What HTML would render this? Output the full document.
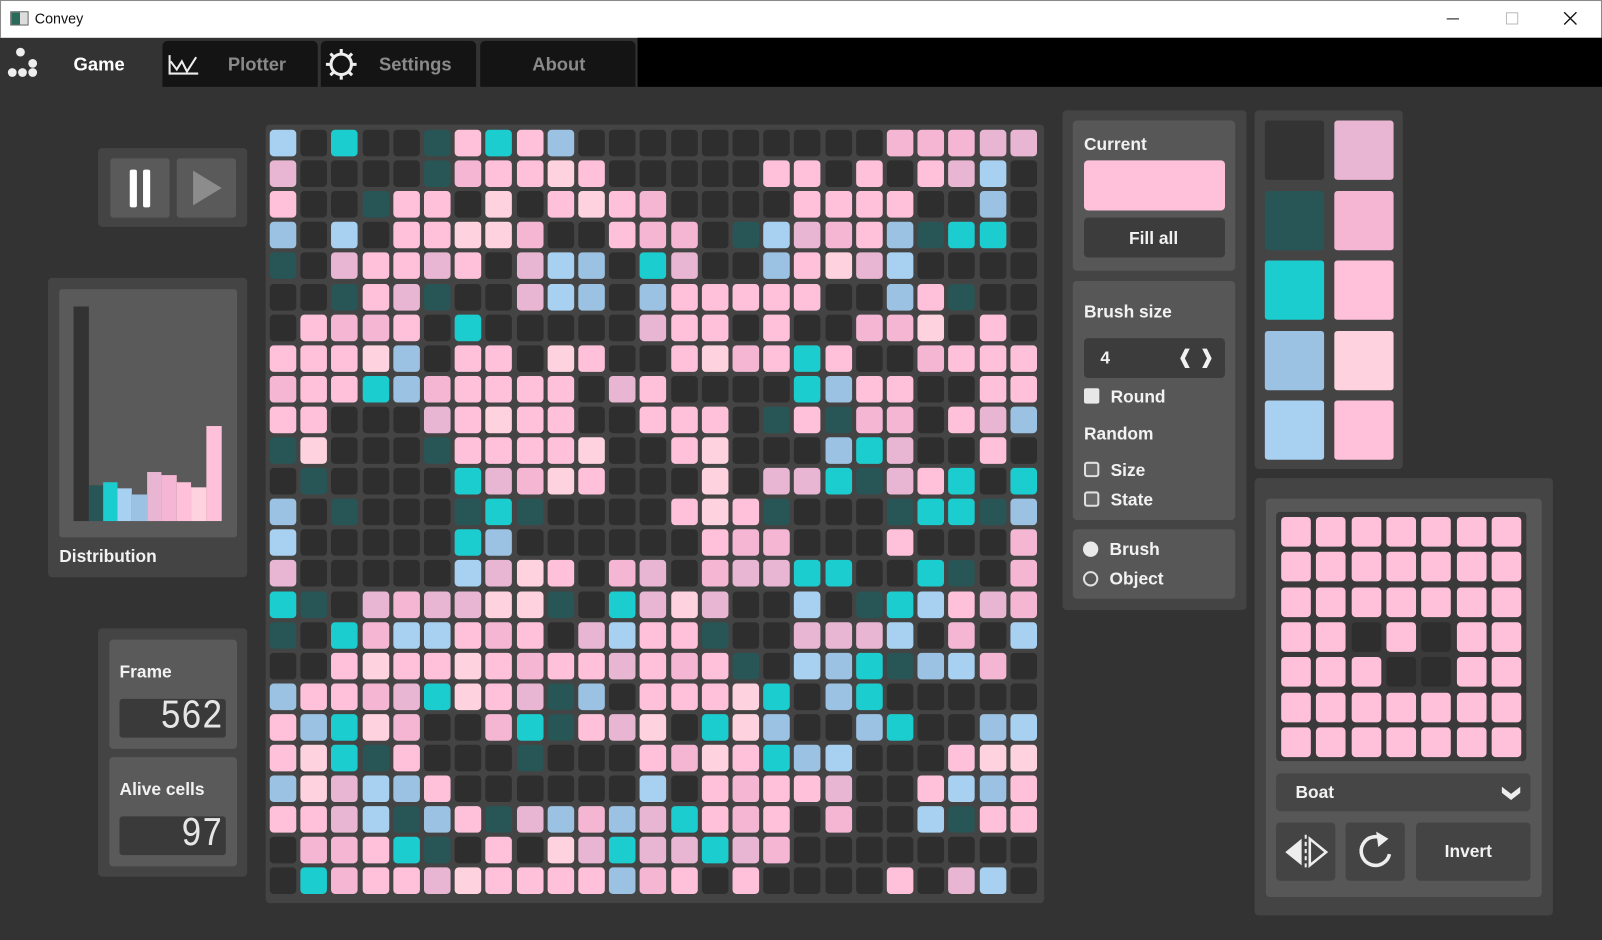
<!DOCTYPE html>
<html><head><meta charset="utf-8"><style>
*{box-sizing:border-box;margin:0;padding:0}
html,body{width:1602px;height:940px;overflow:hidden;background:#333}
#w{position:absolute;left:0;top:0;width:1568px;height:920px;transform:scale(1.02168);transform-origin:0 0;background:#333;font-family:"Liberation Sans","DejaVu Sans",sans-serif;font-weight:bold;color:#f0f0f0}
.a{position:absolute}
.pn{position:absolute;background:#444;border-radius:4px}
.in{position:absolute;background:#575757;border-radius:4px}
.lb{position:absolute;font-size:17px;color:#f2f2f2;white-space:nowrap}
.tab{position:absolute;top:40px;height:45px;background:#141414;border-radius:5px 5px 0 0;color:#8a8a8a;font-size:18px}
.c{position:absolute;width:26px;height:26px;border-radius:4px}
.btn{position:absolute;background:#3c3c3c;border-radius:4px}
.seg{position:absolute;font-family:"Liberation Mono",monospace;font-weight:normal;font-size:40px;color:#e6e6e6;transform:scaleX(0.85);transform-origin:right center}
</style></head><body><div id="w">
<!-- title bar -->
<div class="a" style="left:0;top:0;width:1568px;height:37px;background:#fff;border:1px solid #8a8a8a;border-bottom:none"></div>
<div class="a" style="left:10px;top:11px;width:18px;height:14px;border:1px solid #666;background:linear-gradient(90deg,#2a6a5a 0 55%,#ddd 55%)"></div>
<div class="a" style="left:34px;top:10px;font-size:14px;font-weight:normal;color:#111">Convey</div>
<div class="a" style="left:1416px;top:18px;width:12px;height:1px;background:#111"></div>
<div class="a" style="left:1474px;top:12px;width:12px;height:12px;border:1px solid #bbb"></div>
<svg class="a" style="left:1530px;top:11px" width="14" height="14"><path d="M1 1L13 13M13 1L1 13" stroke="#111" stroke-width="1.3"/></svg>
<!-- tab bar -->
<div class="a" style="left:624px;top:37px;width:944px;height:48px;background:#000"></div>
<svg class="a" style="left:6px;top:44px" width="34" height="34"><g fill="#eee"><circle cx="14" cy="7" r="4.3"/><circle cx="26" cy="18" r="4.3"/><circle cx="6" cy="27" r="4.3"/><circle cx="16" cy="27" r="4.3"/><circle cx="26" cy="27" r="4.3"/></g></svg>
<div class="a" style="left:72px;top:53px;font-size:18px;color:#fff">Game</div>
<div class="tab" style="left:159px;width:152px"><svg class="a" style="left:5px;top:12px" width="32" height="22"><path d="M2 2V20H30M3 8L9 16L14 8L19 18L28 4" stroke="#eee" stroke-width="2" fill="none"/></svg><span class="a" style="left:64px;top:13px">Plotter</span></div>
<div class="tab" style="left:314px;width:152px"><svg class="a" style="left:4px;top:8px" width="32" height="30" viewBox="-16 -15 32 30"><g stroke="#eee" stroke-width="3"><circle r="10" fill="none"/><path d="M0-15V-9M0 9V15M-15 0H-9M9 0H15M-10.6-10.6L-6.4-6.4M6.4 6.4L10.6 10.6M10.6-10.6L6.4-6.4M-6.4 6.4L-10.6 10.6"/></g></svg><span class="a" style="left:57px;top:13px">Settings</span></div>
<div class="tab" style="left:470px;width:152px"><span class="a" style="left:51px;top:13px">About</span></div>
<!-- play panel -->
<div class="pn" style="left:96px;top:145px;width:146px;height:77px"></div>
<div class="a" style="left:108px;top:155px;width:58px;height:58px;background:#5a5a5a;border-radius:3px"></div>
<div class="a" style="left:127px;top:166px;width:7px;height:37px;background:#fff;border-radius:2px"></div>
<div class="a" style="left:140px;top:166px;width:7px;height:37px;background:#fff;border-radius:2px"></div>
<div class="a" style="left:173px;top:155px;width:58px;height:58px;background:#5a5a5a;border-radius:3px"></div>
<svg class="a" style="left:173px;top:155px" width="58" height="58"><path d="M16 12L44 29L16 46Z" fill="#8c8c8c"/></svg>
<!-- distribution -->
<div class="pn" style="left:47px;top:272px;width:195px;height:293px"></div>
<div class="a" style="left:58px;top:283px;width:174px;height:243px;background:#5a5a5a;border-radius:3px"></div>
<div class="a" style="left:72px;top:300px;width:15px;height:210px;background:#333"></div>
<div class="a" style="left:87px;top:475px;width:14px;height:35px;background:#285555"></div>
<div class="a" style="left:101px;top:472px;width:14px;height:38px;background:#1ccdd0"></div>
<div class="a" style="left:115px;top:478px;width:14px;height:32px;background:#a8d0f0"></div>
<div class="a" style="left:129px;top:484px;width:15px;height:26px;background:#9bc2e2"></div>
<div class="a" style="left:144px;top:462px;width:14px;height:48px;background:#e8b6d2"></div>
<div class="a" style="left:158px;top:465px;width:15px;height:45px;background:#f4b6d3"></div>
<div class="a" style="left:173px;top:472px;width:14px;height:38px;background:#fec1d9"></div>
<div class="a" style="left:187px;top:477px;width:15px;height:33px;background:#fed2de"></div>
<div class="a" style="left:202px;top:417px;width:15px;height:93px;background:#fec1d9"></div>
<div class="lb" style="left:58px;top:535px">Distribution</div>
<!-- frame -->
<div class="pn" style="left:96px;top:615px;width:146px;height:243px"></div>
<div class="in" style="left:107px;top:626px;width:125px;height:107px;background:#5a5a5a"></div>
<div class="lb" style="left:117px;top:648px">Frame</div>
<div class="a" style="left:117px;top:684px;width:104px;height:38px;background:#3a3a3a;border-radius:3px"></div>
<div class="seg" style="right:1350px;top:680px">562</div>
<div class="in" style="left:107px;top:741px;width:125px;height:107px;background:#5a5a5a"></div>
<div class="lb" style="left:117px;top:763px">Alive cells</div>
<div class="a" style="left:117px;top:799px;width:104px;height:38px;background:#3a3a3a;border-radius:3px"></div>
<div class="seg" style="right:1350px;top:795px">97</div>
<!-- grid -->
<div class="pn" id="g" style="left:260px;top:122px;width:762px;height:762px"></div>
<!-- right controls -->
<div class="pn" style="left:1040px;top:108px;width:180px;height:489px"></div>
<div class="in" style="left:1050px;top:118px;width:159px;height:147px"></div>
<div class="lb" style="left:1061px;top:132px">Current</div>
<div class="a" style="left:1061px;top:157px;width:138px;height:49px;background:#fec1d9;border-radius:4px"></div>
<div class="btn" style="left:1061px;top:213px;width:138px;height:39px"></div>
<div class="lb" style="left:1105px;top:224px">Fill all</div>
<div class="in" style="left:1050px;top:275px;width:159px;height:234px"></div>
<div class="lb" style="left:1061px;top:296px">Brush size</div>
<div class="btn" style="left:1061px;top:331px;width:138px;height:39px"></div>
<div class="lb" style="left:1077px;top:341px">4</div>
<div class="lb" style="left:1152px;top:339px;font-size:19px">❰ ❱</div>
<div class="a" style="left:1061px;top:380px;width:15px;height:15px;background:#e8e8e8;border-radius:2px"></div>
<div class="lb" style="left:1087px;top:379px">Round</div>
<div class="lb" style="left:1061px;top:415px">Random</div>
<div class="a" style="left:1061px;top:452px;width:15px;height:15px;border:2px solid #e0e0e0;background:#6a6a6a;border-radius:3px"></div>
<div class="lb" style="left:1087px;top:451px">Size</div>
<div class="a" style="left:1061px;top:481px;width:15px;height:15px;border:2px solid #e0e0e0;background:#6a6a6a;border-radius:3px"></div>
<div class="lb" style="left:1087px;top:480px">State</div>
<div class="in" style="left:1050px;top:518px;width:159px;height:68px"></div>
<div class="a" style="left:1060px;top:530px;width:15px;height:15px;border-radius:50%;background:#eaeaea"></div>
<div class="lb" style="left:1086px;top:528px">Brush</div>
<div class="a" style="left:1060px;top:559px;width:15px;height:15px;border-radius:50%;border:2px solid #e0e0e0"></div>
<div class="lb" style="left:1086px;top:557px">Object</div>
<!-- palette -->
<div class="pn" style="left:1228px;top:108px;width:145px;height:351px"></div>
<div id="pal"></div>
<!-- object -->
<div class="pn" style="left:1228px;top:468px;width:292px;height:428px"></div>
<div class="in" style="left:1239px;top:488px;width:270px;height:390px"></div>
<div class="a" id="og" style="left:1249px;top:501px;width:245px;height:244px;background:#3a3a3a;border-radius:4px"></div>
<div class="a" style="left:1249px;top:757px;width:249px;height:37px;background:#464646;border-radius:4px"></div>
<div class="lb" style="left:1268px;top:766px">Boat</div>
<svg class="a" style="left:1469px;top:767px" width="20" height="17"><path d="M1 3L10 10L19 3V9L10 16L1 9Z" fill="#eee"/></svg>
<div class="pn" style="left:1249px;top:805px;width:58px;height:57px"></div>
<svg class="a" style="left:1249px;top:805px" width="58" height="57"><path d="M29 12V46" stroke="#eee" stroke-width="2" stroke-dasharray="4 3"/><path d="M25 16V42L9 29Z" fill="#eee"/><path d="M33 16V42L49 29Z" fill="none" stroke="#eee" stroke-width="2.5"/></svg>
<div class="pn" style="left:1317px;top:805px;width:58px;height:57px"></div>
<svg class="a" style="left:1317px;top:805px" width="58" height="57"><path d="M38 17A14 14 0 1 0 43 31" fill="none" stroke="#eee" stroke-width="3.5"/><path d="M30 9L42 16L32 24Z" fill="#eee"/></svg>
<div class="pn" style="left:1386px;top:805px;width:112px;height:57px"></div>
<div class="lb" style="left:1414px;top:824px">Invert</div>
</div>
<script>
var col={D:'#2e2e2e',T:'#285555',C:'#1ccdd0',B:'#a8d0f0',M:'#9bc2e2',P:'#fec1d9',V:'#e8b6d2',Q:'#f4b6d3',L:'#fed2de'};
var R=["BDCDDTPCPMDDDDDDDDDDQQQVV","VDDDDTQPPLPDDDDDPPDPDPVBD","PDDTPPDLDPLPQDDDDPPPPDDMD","MDBDPPLLQDDPQQDTBVQPMTCCD","TDVPPVPDVBMDCVDDMPLVBDDDD","DDTPVTDDVBMDMPPPPPDDMPTDD","DPQQPDCDDDDDVPPDPDDQQLDPD","PPPLMDPPDLPDDPLQPCPDDQPPP","QPPCMQPPPPDVPDDDDCMPPDDPP","PPDDDVPLPPDDPPPDTPTQQDPVM","TLDDDTPPPPLDDPLDDDMCVDDPD","DTDDDDCVQLPDDDLDVVCTVPCDC","MDTDDDTCTDDDDPLPTDDDTCCTM","BDDDDDCMDDDDDDPQQDDDPDDDQ","VDDDDDBVLPDQVDQVVCCDDCTDQ","CTDVQVVLLTDCVLVDDBDTCBPVQ","TDCQBBPQPDVBPPTDDVVVBDQDB","DDPLPPLPQPPVPQPTDBMCTMBQD","MPPQVCLPVTMDPPPLCDMCDDDDD","PMCLQDDQCTPVLDCLMDDMCDDMB","PLCTPDDDTDDDPQLPCMBDDDPLL","MLVBMPDDDDDDBDPQPPVDDPBMP","PPVBTMPTVMQMVCPQPDQDDBTPP","DQQPCTDPDLVCVVCVQDDDDDDDD","DCQPPVLPPPPMQPDPDDDDPDVBD"];
var h='';for(var r=0;r<25;r++)for(var c=0;c<25;c++){h+='<div class="c" style="left:'+(4+c*30.2).toFixed(1)+'px;top:'+(5+r*30.1).toFixed(1)+'px;background:'+col[R[r][c]]+'"></div>';}
document.getElementById('g').innerHTML=h;
var pc=[['D','V'],['T','Q'],['C','P'],['M','L'],['B','P']];h='';
for(var i=0;i<5;i++)for(var j=0;j<2;j++)h+='<div class="a" style="left:'+(1238+j*68)+'px;top:'+(118+i*68.5)+'px;width:58px;height:58px;border-radius:3px;background:'+(pc[i][j]=='D'?'#333':col[pc[i][j]])+'"></div>';
document.getElementById('pal').innerHTML=h;
var O=["PPPPPPP","PPPPPPP","PPPPPPP","PPDPDPP","PPPDDPP","PPPPPPP","PPPPPPP"];h='';
for(var r=0;r<7;r++)for(var c=0;c<7;c++)h+='<div class="a" style="left:'+(5+c*34.3).toFixed(1)+'px;top:'+(5+r*34.3).toFixed(1)+'px;width:29px;height:29px;border-radius:4px;background:'+col[O[r][c]]+'"></div>';
document.getElementById('og').innerHTML=h;
</script>
</body></html>
